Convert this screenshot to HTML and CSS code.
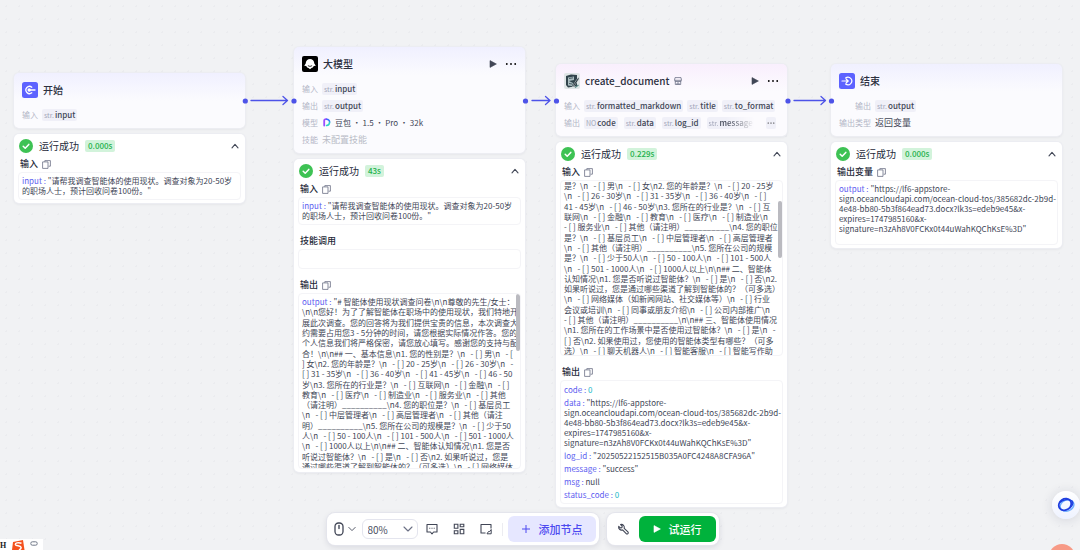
FILE: index.html
```html
<!DOCTYPE html>
<html lang="zh-CN">
<head>
    <meta charset="UTF-8">
    <meta name="viewport" content="width=device-width, initial-scale=1.0">
    <title>工作流</title>
    <link rel="stylesheet" href="styles.css">
</head>
<body>
    <!-- 公用图标 -->
    <svg class="sprite" aria-hidden="true">
        <symbol id="i-check" viewBox="0 0 14 14"><circle cx="7" cy="7" r="7" fill="#3ec254"/><path d="M4.2 7.2l2 2 3.6-3.8" fill="none" stroke="#fff" stroke-width="1.5" stroke-linecap="round" stroke-linejoin="round"/></symbol>
        <symbol id="i-up" viewBox="0 0 8 8"><path d="M1 5.8L4 2.4l3 3.4" fill="none" stroke="currentColor" stroke-width="1.1" stroke-linecap="round" stroke-linejoin="round"/></symbol>
        <symbol id="i-copy" viewBox="0 0 9 9"><path d="M2.8 1.8V.6h5.6v5.6H6.6M.6 1.900h5.400v6.500H.6z" fill="none" stroke="currentColor" stroke-width=".8" stroke-linejoin="round"/></symbol>
        <symbol id="i-play" viewBox="0 0 8 8"><path d="M1 .6v6.8L7.4 4z" fill="currentColor" stroke="currentColor" stroke-width=".6" stroke-linejoin="round"/></symbol>
        <symbol id="i-more" viewBox="0 0 12 4"><circle cx="1.8" cy="2" r=".9"/><circle cx="6" cy="2" r=".9"/><circle cx="10.2" cy="2" r=".9"/></symbol>
        <symbol id="i-down" viewBox="0 0 10 8"><path d="M1 2l4 4 4-4" fill="none" stroke="currentColor" stroke-width="1.1" stroke-linecap="round" stroke-linejoin="round"/></symbol>
    </svg>

    <main class="canvas">
        <!-- 连线 -->
        <svg class="edges" width="840" height="20" aria-hidden="true">
            <g fill="none" stroke="#4d53e8" stroke-width="1.3" stroke-linecap="round" stroke-linejoin="round">
                <path d="M251 10.500H287M283 6.500l4.500 4-4.500 4"/>
                <path d="M532 10.500H549M545.500 6.500l4.500 4-4.500 4"/>
                <path d="M794 10.500H824M821 6.500l4.500 4-4.500 4"/>
            </g>
            <g fill="#4d53e8">
                <circle cx="245.300" cy="11" r="2.600"/><circle cx="294" cy="11" r="2.600"/>
                <circle cx="525.500" cy="11" r="2.600"/><circle cx="556.500" cy="11" r="2.600"/>
                <circle cx="788" cy="11" r="2.600"/><circle cx="831.500" cy="11" r="2.600"/>
            </g>
        </svg>

        <!-- 开始 -->
        <article class="node node-start">
            <section class="card">
                <header class="card-head">
                    <svg class="logo" viewBox="0 0 16 16"><rect width="16" height="16" rx="2.500" fill="#5c62ff"/><path d="M9.800 5.200a3.600 3.600 0 1 0 0 5.600M7 8h6" fill="none" stroke="#fff" stroke-width="1.300" stroke-linecap="round"/><circle cx="7.200" cy="8" r="1.700" fill="#fff"/></svg>
                    <h2>开始</h2>
                </header>
                <dl class="rows">
                    <div><dt>输入</dt><dd><span class="tag"><i>str.</i>input</span></dd></div>
                </dl>
            </section>
            <section class="result">
                <header class="result-head">
                    <svg class="check"><use href="#i-check"/></svg>
                    <h3>运行成功</h3><span class="time">0.000s</span>
                    <button type="button" class="fold" aria-label="收起"><svg><use href="#i-up"/></svg></button>
                </header>
                <h4>输入 <button type="button" aria-label="复制"><svg><use href="#i-copy"/></svg></button></h4>
                <div class="box"><p><b>input : </b>"请帮我调查智能体的使用现状。调查对象为20-50岁
的职场人士，预计回收问卷100份。"</p></div>
            </section>
        </article>

        <!-- 大模型 -->
        <article class="node node-llm">
            <section class="card">
                <header class="card-head">
                    <svg class="logo" viewBox="0 0 16 16"><rect width="16" height="16" rx="2" fill="#000"/><path d="M3.700 7.400a4.300 4.300 0 0 1 8.600 0l1.500 2.300-2 .3c-.6 1.400-1.400 1.800-2.300 2L8 13.200 6.500 12c-.9-.2-1.700-.6-2.300-2l-2-.3z" fill="#fff"/><path d="M6.200 9.900q1.800 1.300 3.600 0" fill="none" stroke="#000" stroke-width=".800" stroke-linecap="round"/></svg>
                    <h2>大模型</h2>
                    <button type="button" class="play" aria-label="运行"><svg><use href="#i-play"/></svg></button>
                    <button type="button" class="more" aria-label="更多"><svg><use href="#i-more"/></svg></button>
                </header>
                <dl class="rows">
                    <div><dt>输入</dt><dd><span class="tag"><i>str.</i>input</span></dd></div>
                    <div><dt>输出</dt><dd><span class="tag"><i>str.</i>output</span></dd></div>
                    <div><dt>模型</dt><dd><svg class="model" viewBox="0 0 9 9"><path d="M2.200 7.500V2.500C2.200 1.500 3 1 4.300 1.200" fill="none" stroke="#9b4dff" stroke-width="1.800" stroke-linecap="round"/><path d="M4.300 1.200c2.400 0 3.500 1.700 3.300 3.300" fill="none" stroke="#2f6bff" stroke-width="1.500"/><path d="M7.600 4.300C7.500 6.500 6 7.500 4.500 7.600" fill="none" stroke="#2ed3c6" stroke-width="1.500" stroke-linecap="round"/></svg>豆包 · 1.5 · Pro · 32k</dd></div>
                    <div><dt>技能</dt><dd class="empty">未配置技能</dd></div>
                </dl>
            </section>
            <section class="result">
                <header class="result-head">
                    <svg class="check"><use href="#i-check"/></svg>
                    <h3>运行成功</h3><span class="time">43s</span>
                    <button type="button" class="fold" aria-label="收起"><svg><use href="#i-up"/></svg></button>
                </header>
                <h4>输入 <button type="button" aria-label="复制"><svg><use href="#i-copy"/></svg></button></h4>
                <div class="box"><p><b>input : </b>"请帮我调查智能体的使用现状。调查对象为20-50岁
的职场人士，预计回收问卷100份。"</p></div>
                <h4>技能调用</h4>
                <div class="box box-empty"></div>
                <h4>输出 <button type="button" aria-label="复制"><svg><use href="#i-copy"/></svg></button></h4>
                <div class="box scroll">
                    <div class="lines">
                        <span><b>output : </b>"# 智能体使用现状调查问卷\n\n尊敬的先生/女士：</span>
                        <span>\n\n您好！为了了解智能体在职场中的使用现状，我们特地开</span>
                        <span>展此次调查。您的回答将为我们提供宝贵的信息，本次调查大</span>
                        <span>约需要占用您3 - 5分钟的时间，请您根据实际情况作答。您的</span>
                        <span>个人信息我们将严格保密，请您放心填写。感谢您的支持与配</span>
                        <span>合！\n\n## 一、基本信息\n1. 您的性别是？\n   - [ ] 男\n   - [</span>
                        <span>] 女\n2. 您的年龄是？\n   - [ ] 20 - 25岁\n   - [ ] 26 - 30岁\n   -</span>
                        <span>[ ] 31 - 35岁\n   - [ ] 36 - 40岁\n   - [ ] 41 - 45岁\n   - [ ] 46 - 50</span>
                        <span>岁\n3. 您所在的行业是？\n   - [ ] 互联网\n   - [ ] 金融\n   - [ ]</span>
                        <span>教育\n   - [ ] 医疗\n   - [ ] 制造业\n   - [ ] 服务业\n   - [ ] 其他</span>
                        <span>（请注明）__________\n4. 您的职位是？\n   - [ ] 基层员工</span>
                        <span>\n   - [ ] 中层管理者\n   - [ ] 高层管理者\n   - [ ] 其他（请注</span>
                        <span>明）__________\n5. 您所在公司的规模是？\n   - [ ] 少于50</span>
                        <span>人\n   - [ ] 50 - 100人\n   - [ ] 101 - 500人\n   - [ ] 501 - 1000人</span>
                        <span>\n   - [ ] 1000人以上\n\n## 二、智能体认知情况\n1. 您是否</span>
                        <span>听说过智能体？\n   - [ ] 是\n   - [ ] 否\n2. 如果听说过，您是</span>
                        <span>通过哪些渠道了解到智能体的？（可多选）\n   - [ ] 网络媒体</span>
                    </div>
                    <div class="bar"></div>
                </div>
            </section>
        </article>

        <!-- create_document 插件 -->
        <article class="node node-doc">
            <section class="card card-plugin">
                <header class="card-head">
                    <svg class="logo" viewBox="0 0 16 16"><rect width="16" height="16" rx="2" fill="#dfe5e6"/><path d="M2 3l5-1.500L13 2v11l-9 1.500L2 12z" fill="#31434b"/><path d="M4 4.500l6-1v3.500L5 8l4 2-1 3-4-.5z" fill="#a9bcbf"/><path d="M5 5.500l4-.7M5 10.500l3 .5" stroke="#31434b" stroke-width=".800" fill="none"/><path d="M14.500 4L9.500 11.500 8.500 14l2-1.500L15 6z" fill="#1c2a33" stroke="#e8eeee" stroke-width=".500"/><path d="M11 14.500l3.500-2.500" stroke="#5b8886" stroke-width="1.200"/></svg>
                    <h2>create_document</h2>
                    <svg class="shop" viewBox="0 0 8 8"><path d="M1 .6h6l.5 2.700H.5zM1 3.300v1.200h6V3.300M1.300 4.500v3h5.400v-3M3 7.400V6h2v1.400" fill="none" stroke="#6b7085" stroke-width=".8"/></svg>
                    <button type="button" class="play" aria-label="运行"><svg><use href="#i-play"/></svg></button>
                    <button type="button" class="more" aria-label="更多"><svg><use href="#i-more"/></svg></button>
                </header>
                <dl class="rows">
                    <div><dt>输入</dt><dd><span class="tag"><i>str.</i>formatted_markdown</span><span class="tag"><i>str.</i>title</span><span class="tag"><i>str.</i>to_format</span></dd></div>
                    <div><dt>输出</dt><dd class="loose"><span class="tag"><i>NO</i>code</span><span class="tag"><i>str.</i>data</span><span class="tag"><i>str.</i>log_id</span><span class="tag fade"><i>str.</i>message</span><span class="tag rest"><svg><use href="#i-more"/></svg></span></dd></div>
                </dl>
            </section>
            <section class="result">
                <header class="result-head">
                    <svg class="check"><use href="#i-check"/></svg>
                    <h3>运行成功</h3><span class="time">0.229s</span>
                    <button type="button" class="fold" aria-label="收起"><svg><use href="#i-up"/></svg></button>
                </header>
                <h4>输入 <button type="button" aria-label="复制"><svg><use href="#i-copy"/></svg></button></h4>
                <div class="box scroll scrolled">
                    <div class="lines">
                        <span>是？\n   - [ ] 男\n   - [ ] 女\n2. 您的年龄是？\n   - [ ] 20 - 25岁</span>
                        <span>\n   - [ ] 26 - 30岁\n   - [ ] 31 - 35岁\n   - [ ] 36 - 40岁\n   - [ ]</span>
                        <span>41 - 45岁\n   - [ ] 46 - 50岁\n3. 您所在的行业是？\n   - [ ] 互</span>
                        <span>联网\n   - [ ] 金融\n   - [ ] 教育\n   - [ ] 医疗\n   - [ ] 制造业\n</span>
                        <span>- [ ] 服务业\n   - [ ] 其他（请注明）__________\n4. 您的职位</span>
                        <span>是？\n   - [ ] 基层员工\n   - [ ] 中层管理者\n   - [ ] 高层管理者</span>
                        <span>\n   - [ ] 其他（请注明）__________\n5. 您所在公司的规模</span>
                        <span>是？\n   - [ ] 少于50人\n   - [ ] 50 - 100人\n   - [ ] 101 - 500人</span>
                        <span>\n   - [ ] 501 - 1000人\n   - [ ] 1000人以上\n\n## 二、智能体</span>
                        <span>认知情况\n1. 您是否听说过智能体？\n   - [ ] 是\n   - [ ] 否\n2.</span>
                        <span>如果听说过，您是通过哪些渠道了解到智能体的？（可多选）</span>
                        <span>\n   - [ ] 网络媒体（如新闻网站、社交媒体等）\n   - [ ] 行业</span>
                        <span>会议或培训\n   - [ ] 同事或朋友介绍\n   - [ ] 公司内部推广\n</span>
                        <span>- [ ] 其他（请注明）__________\n\n## 三、智能体使用情况</span>
                        <span>\n1. 您所在的工作场景中是否使用过智能体？\n   - [ ] 是\n   -</span>
                        <span>[ ] 否\n2. 如果使用过，您使用的智能体类型有哪些？（可多</span>
                        <span>选）\n   - [ ] 聊天机器人\n   - [ ] 智能客服\n   - [ ] 智能写作助</span>
                    </div>
                    <div class="bar"></div>
                </div>
                <h4>输出 <button type="button" aria-label="复制"><svg><use href="#i-copy"/></svg></button></h4>
                <div class="box json">
                    <p><b>code : </b><em>0</em></p>
                    <p><b>data : </b>"https://lf6-appstore-
sign.oceancloudapi.com/ocean-cloud-tos/385682dc-2b9d-
4e48-bb80-5b3f864ead73.docx?lk3s=edeb9e45&amp;x-
expires=1747985160&amp;x-
signature=n3zAh8V0FCKx0t44uWahKQChKsE%3D"</p>
                    <p><b>log_id : </b>"20250522152515B035A0FC4248A8CFA96A"</p>
                    <p><b>message : </b>"success"</p>
                    <p><b>msg : </b>null</p>
                    <p><b>status_code : </b><em>0</em></p>
                </div>
            </section>
        </article>

        <!-- 结束 -->
        <article class="node node-end">
            <section class="card">
                <header class="card-head">
                    <svg class="logo" viewBox="0 0 16 16"><rect width="16" height="16" rx="2.500" fill="#5c62ff"/><path d="M6.600 5a3.800 3.800 0 1 1 0 6M3 8h6M7.300 6.200L9.200 8 7.300 9.800" fill="none" stroke="#fff" stroke-width="1.200" stroke-linecap="round" stroke-linejoin="round"/></svg>
                    <h2>结束</h2>
                </header>
                <dl class="rows wide">
                    <div><dt>输出</dt><dd><span class="tag"><i>str.</i>output</span></dd></div>
                    <div><dt>输出类型</dt><dd class="value">返回变量</dd></div>
                </dl>
            </section>
            <section class="result">
                <header class="result-head">
                    <svg class="check"><use href="#i-check"/></svg>
                    <h3>运行成功</h3><span class="time">0.000s</span>
                    <button type="button" class="fold" aria-label="收起"><svg><use href="#i-up"/></svg></button>
                </header>
                <h4>输出变量 <button type="button" aria-label="复制"><svg><use href="#i-copy"/></svg></button></h4>
                <div class="box box-tall"><p><b>output : </b>"https://lf6-appstore-
sign.oceancloudapi.com/ocean-cloud-tos/385682dc-2b9d-
4e48-bb80-5b3f864ead73.docx?lk3s=edeb9e45&amp;x-
expires=1747985160&amp;x-
signature=n3zAh8V0FCKx0t44uWahKQChKsE%3D"</p></div>
            </section>
        </article>
    </main>

    <!-- 底部工具栏 -->
    <nav class="toolbar">
        <div class="group">
            <button type="button" class="mouse" aria-label="鼠标模式">
                <svg width="10" height="14" viewBox="0 0 10 14"><rect x="1" y="1" width="8" height="12" rx="3.500" fill="none" stroke="currentColor" stroke-width="1.300"/><path d="M5 3.500v3" stroke="currentColor" stroke-width="1.400" stroke-linecap="round"/></svg>
                <svg width="8" height="8"><use href="#i-down"/></svg>
            </button>
            <label class="zoom">
                <select aria-label="缩放"><option>80%</option></select>
                <svg width="10" height="8"><use href="#i-down"/></svg>
            </label>
            <button type="button" class="tool" aria-label="注释"><svg viewBox="0 0 12 12"><path d="M1 1.500h10v7.500H7.600L6 10.800 4.400 9H1z" fill="none" stroke="currentColor" stroke-width="1.100" stroke-linejoin="round"/><path d="M3.300 5.300h1M5.500 5.300h1M7.700 5.300h1" stroke="currentColor" stroke-width="1.100"/></svg></button>
            <button type="button" class="tool" aria-label="优化布局"><svg viewBox="0 0 12 12"><path d="M1.300 1.200h3.600v4H1.300zM7.200 1.200h3.600v2.600H7.200zM1.300 7.800h3.600v3H1.300zM7.200 6.400h3.600v4.400H7.200z" fill="none" stroke="currentColor" stroke-width="1.100"/></svg></button>
            <button type="button" class="tool" aria-label="缩略图"><svg viewBox="0 0 12 12"><path d="M11 5.500v-4H1v8.500h4.500" fill="none" stroke="currentColor" stroke-width="1.100" stroke-linejoin="round"/><path d="M11.200 6.500v4.300H7l1.500-2.300h1.200z" fill="none" stroke="currentColor" stroke-width="1" stroke-linejoin="round"/></svg></button>
            <span class="divider"></span>
            <button type="button" class="add"><svg width="10" height="10" viewBox="0 0 10 10"><path d="M5 1v8M1 5h8" stroke="currentColor" stroke-width="1"/></svg>添加节点</button>
        </div>
        <div class="group">
            <button type="button" class="tool wrench" aria-label="调试"><svg viewBox="0 0 12 12"><path d="M3.600 1.500L5.200 3.100 4.900 4.600 3.400 4.900 1.700 3.300a3 3 0 0 0 3.900 3.600l3.600 3.700a1.200 1.200 0 0 0 1.700-1.700L7.200 5.300a3 3 0 0 0-3.600-3.800z" fill="none" stroke="currentColor" stroke-width="1.100" stroke-linejoin="round"/></svg></button>
            <button type="button" class="run"><svg width="8" height="8"><use href="#i-play"/></svg>试运行</button>
        </div>
    </nav>

    <!-- 悬浮助手 -->
    <button type="button" class="assistant" aria-label="助手">
        <svg width="18" height="18" viewBox="0 0 18 18" fill="none"><ellipse cx="10" cy="9.500" rx="7" ry="5.500" stroke="#6fb1ff" stroke-width="1.500" transform="rotate(-20 10 9.500)"/><ellipse cx="8" cy="8.500" rx="6.500" ry="5.600" stroke="#1f3fe0" stroke-width="1.800" transform="rotate(-35 8 8.500)"/><path d="M3 6.500c3-3 9-4 12-1.500 1.500 2 .5 5-2.500 7.500" stroke="#1f3fe0" stroke-width="1.300"/></svg>
    </button>
    <span class="bubble"></span>

    <!-- 输入法状态栏 -->
    <div class="ime">
        <span>H</span>
        <svg class="ime-logo" width="14" height="10" viewBox="0 0 14 10"><path d="M2 2l10-2 1.500 10H1z" fill="#f4511e"/><path d="M10.500 3.200C7 2 4 3 4.500 4.800c.5 1.400 5 .7 5.500 2.400.3 1-.5 2-2 2.800" fill="none" stroke="#fff" stroke-width="1.500"/></svg>
        <svg class="ime-key" width="8" height="5" viewBox="0 0 8 5"><rect x=".8" y=".8" width="6.400" height="3.400" rx="1.500" fill="none" stroke="#707888" stroke-width="1"/></svg>
    </div>
</body>
</html>
```
FILE: styles.css
```css
* {
    box-sizing: border-box;
}

body {
    margin: 0;
    height: 100vh;
    position: relative;
    overflow: hidden;
    font-family: "Noto Sans CJK SC", "Noto Sans", sans-serif;
    font-size: 8px;
    line-height: 10px;
    color: #414656;
    background-color: #f1f2f4;
    background-image: radial-gradient(circle, #ebecef 1px, transparent 1px);
    background-size: 13px 13px;
}

h2, h3, h4, p, dl, dd {
    margin: 0;
}

button {
    padding: 0;
    border: none;
    background: none;
    font-family: inherit;
    color: inherit;
    cursor: pointer;
}

svg {
    display: block;
}

.sprite {
    position: absolute;
    width: 0;
    height: 0;
}

.canvas {
    position: relative;
    height: 100%;
}

.edges {
    position: absolute;
    left: 0;
    top: 90px;
    z-index: 1;
}

/* 节点 */
.node {
    position: absolute;
    width: 231px;
    display: flex;
    flex-direction: column;
    gap: 6px;
}

.node-start { left: 14px; top: 73px; }
.node-llm { left: 294px; top: 47px; }
.node-doc { left: 556px; top: 64px; }
.node-end { left: 831px; top: 64px; }

.card,
.result {
    border-radius: 5px;
    box-shadow: 0 0 0 1px #ecedf2, 0 1px 3px rgba(30, 35, 70, 0.1);
}

.card {
    padding: 9px 8px 5px;
    background: linear-gradient(#f0f0ff, #fbfbfe 28px);
}

.card-plugin {
    background: linear-gradient(#f9effd, #fcfbfe 28px);
}

.card-head {
    display: flex;
    align-items: center;
    height: 16px;
    margin-bottom: 8px;
}

.logo {
    width: 16px;
    height: 16px;
    margin-right: 5px;
}

h2 {
    font-size: 10px;
    line-height: 16px;
    font-weight: 500;
    color: #2c3040;
}

.shop {
    width: 8px;
    height: 8px;
    margin-left: 5px;
}

.play {
    margin-left: auto;
}

.play svg {
    width: 8px;
    height: 8px;
}

.more {
    margin-left: 8px;
}

.more svg {
    width: 12px;
    height: 4px;
}

.rows > div {
    display: flex;
    align-items: center;
    height: 17px;
}

dt {
    width: 16px;
    margin-right: 4px;
    text-align: right;
    white-space: nowrap;
    color: #b3b6c6;
}

.wide dt {
    width: 32px;
}

dd {
    display: flex;
    align-items: center;
    flex: 1;
    gap: 4px;
    white-space: pre;
}

.loose {
    gap: 6px;
}

.tag {
    display: flex;
    gap: 1px;
    padding: 0 2px;
    border-radius: 2px;
    background: #f0f0f8;
    line-height: 12px;
    font-weight: 500;
}

.tag i {
    font-style: normal;
    font-size: 7px;
    font-weight: 400;
    color: #a3a7ba;
}

.fade {
    -webkit-mask-image: linear-gradient(90deg, #000 40%, transparent);
    mask-image: linear-gradient(90deg, #000 40%, transparent);
}

.rest {
    height: 12px;
    padding: 0 1px;
    align-items: center;
    margin-left: auto;
    margin-right: 3px;
}

.rest svg {
    width: 8px;
    height: 4px;
}

.model {
    width: 9px;
    height: 9px;
}

.empty {
    font-size: 9px;
    color: #b9bbc6;
}

.value {
    font-size: 9px;
}

/* 运行结果 */
.result {
    padding: 4px 4px 3px;
    background: #fff;
}

.result-head {
    display: flex;
    align-items: center;
    height: 16px;
    padding: 0 2px 0 1px;
    margin-bottom: 2px;
}

.check {
    width: 14px;
    height: 14px;
    margin-right: 6px;
}

h3 {
    font-size: 10px;
    line-height: 16px;
    font-weight: 400;
    color: #262a3a;
}

.time {
    margin-left: 6px;
    padding: 0 3px;
    border-radius: 2px;
    background: #d2f3db;
    font-size: 8px;
    line-height: 12px;
    font-weight: 500;
    color: #22b14c;
}

.fold {
    margin-left: auto;
}

.fold svg {
    width: 8px;
    height: 8px;
}

h4 {
    display: flex;
    align-items: center;
    gap: 4px;
    height: 16px;
    padding-left: 2px;
    font-size: 9px;
    font-weight: 500;
    color: #262a3a;
}

h4 svg {
    width: 9px;
    height: 9px;
    color: #6b7085;
}

.box + h4 {
    margin-top: 8px;
}

.box {
    padding: 3px;
    border: 1px solid #f4f4f7;
    border-radius: 4px;
    white-space: pre;
}

.box b {
    font-weight: 400;
    color: #5c5cf0;
}

.box em {
    font-style: normal;
    color: #17b8c8;
}

.box-empty {
    height: 20px;
}

.box-tall {
    height: 65px;
}

.scroll {
    position: relative;
    height: 176px;
    overflow: hidden;
    white-space: normal;
}

.lines {
    display: flex;
    flex-direction: column;
    justify-content: space-between;
    height: 175px;
}

.lines span {
    white-space: pre;
}

.scrolled {
    padding-top: 0;
}

.bar {
    position: absolute;
    top: 0;
    right: 0;
    width: 4px;
    height: 57px;
    border-radius: 2px;
    background: #babac0;
}

.scrolled .bar {
    top: 20px;
}

.json {
    display: flex;
    flex-direction: column;
    gap: 3px;
    padding-top: 4px;
}

/* 底部工具栏 */
.toolbar {
    position: absolute;
    left: 0;
    right: 35px;
    bottom: 5px;
    display: flex;
    justify-content: center;
    gap: 8px;
}

.group {
    display: flex;
    align-items: center;
    height: 32px;
    padding: 3px;
    border-radius: 8px;
    background: #fff;
    box-shadow: 0 0 0 1px #e4e5ec, 0 2px 6px rgba(30, 35, 70, 0.12);
}

.mouse {
    display: flex;
    align-items: center;
    gap: 4px;
    margin: 0 6px 0 4px;
}

.zoom {
    position: relative;
    margin-right: 8px;
}

.zoom select {
    display: block;
    appearance: none;
    width: 56px;
    height: 20px;
    padding: 0 5px;
    border: 1px solid #e4e5ee;
    border-radius: 6px;
    background: #fff;
    font-family: inherit;
    font-size: 10px;
    color: #4a4f60;
}

.zoom svg {
    position: absolute;
    right: 5px;
    top: 6px;
    color: #6b7085;
    pointer-events: none;
}

.tool {
    margin-right: 15px;
}

.tool svg {
    width: 12px;
    height: 12px;
}

.divider {
    width: 1px;
    height: 13px;
    margin: 0 5px 0 -5px;
    background: #ececf1;
}

.add,
.run {
    display: flex;
    align-items: center;
    justify-content: center;
    gap: 8px;
    height: 26px;
    border-radius: 6px;
    font-size: 11px;
    font-weight: 500;
}

.add {
    width: 88px;
    background: #e6e7ff;
    color: #4d49f0;
}

.run {
    width: 77px;
    background: #00b23c;
    color: #fff;
}

.wrench {
    margin: 0 10px 0 7px;
}

/* 悬浮内容 */
.assistant {
    position: absolute;
    right: 0;
    bottom: 31px;
    width: 28px;
    height: 28px;
    display: flex;
    align-items: center;
    justify-content: center;
    border-radius: 50%;
    background: linear-gradient(#fff, #eef2ff);
    box-shadow: 0 1px 12px rgba(30, 35, 70, 0.14);
}

.bubble {
    position: absolute;
    right: 5px;
    bottom: -20px;
    width: 26px;
    height: 26px;
    border-radius: 50%;
    background: #f79a86;
}

.ime {
    position: absolute;
    left: 0;
    bottom: 0;
    display: flex;
    align-items: flex-end;
    gap: 5px;
    width: 43px;
    height: 11px;
    background: #fff;
    font-family: "Liberation Serif", serif;
    font-weight: bold;
    line-height: 8px;
    color: #222;
}

.ime-key {
    align-self: flex-start;
    margin-top: 2px;
}
```
